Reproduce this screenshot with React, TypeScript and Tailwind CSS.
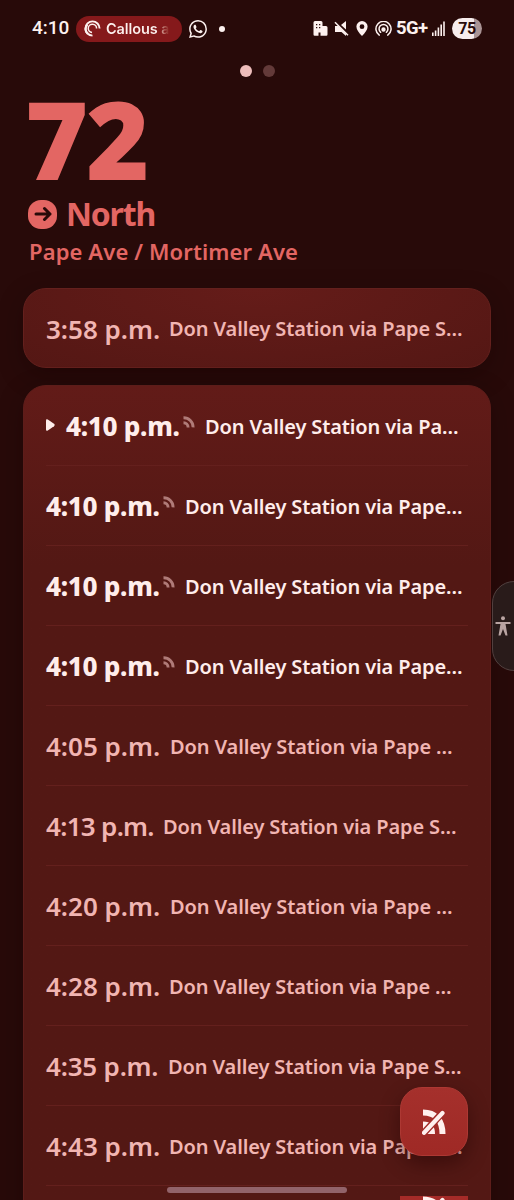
import clsx from 'clsx';

type Departure = {
  time: string;
  destination: string;
  timeWidth: string;
  live?: boolean;
  current?: boolean;
};

const departures: Departure[] = [
  { time: '4:10 p.m.', destination: 'Don Valley Station via Pa…', timeWidth: 'w-[117px]', live: true, current: true },
  { time: '4:10 p.m.', destination: 'Don Valley Station via Pape…', timeWidth: 'w-[117px]', live: true },
  { time: '4:10 p.m.', destination: 'Don Valley Station via Pape…', timeWidth: 'w-[117px]', live: true },
  { time: '4:10 p.m.', destination: 'Don Valley Station via Pape…', timeWidth: 'w-[117px]', live: true },
  { time: '4:05 p.m.', destination: 'Don Valley Station via Pape …', timeWidth: 'w-[124px]' },
  { time: '4:13 p.m.', destination: 'Don Valley Station via Pape S…', timeWidth: 'w-[117px] tracking-[-0.700px]' },
  { time: '4:20 p.m.', destination: 'Don Valley Station via Pape …', timeWidth: 'w-[124px]' },
  { time: '4:28 p.m.', destination: 'Don Valley Station via Pape …', timeWidth: 'w-[123px]' },
  { time: '4:35 p.m.', destination: 'Don Valley Station via Pape S…', timeWidth: 'w-[122px] tracking-[-0.200px]' },
  { time: '4:43 p.m.', destination: 'Don Valley Station via Pape S…', timeWidth: 'w-[123px]' },
];

function StatusBar() {
  return (
    <header className="flex h-[57px] shrink-0 items-center pl-[32px] font-['Roboto',sans-serif] text-[#fdf1ef]">
      <span className="w-[44px] text-[19px] font-medium">4:10</span>
      <div className="flex h-[26px] w-[106px] items-center rounded-full bg-[#85191b] pl-[8px]">
        <svg viewBox="0 0 18 18" className="size-[17px] shrink-0" fill="none" stroke="currentColor">
          <path d="M9 16.5A7.500 7.500 0 1 1 16.500 9" strokeWidth="2" />
          <path d="M8.500 13.200A4.400 4.400 0 1 1 13.300 9" strokeWidth="1.600" />
          <path d="M4 14.500A6.400 6.400 0 0 1 3.500 5" strokeWidth="2.400" />
        </svg>
        <span className="ml-[5px] bg-linear-to-r from-[#fdf1ef] from-80% to-[#85191b] bg-clip-text font-['Inter',sans-serif] text-[14.5px] font-semibold tracking-[-0.1px] text-transparent">
          Callous a
        </span>
      </div>
      <svg viewBox="0 0 24 24" className="ml-[7px] size-[18px]" fill="currentColor">
        <path d="M17.472 14.382c-.297-.149-1.758-.867-2.03-.967-.273-.099-.471-.148-.67.15-.197.297-.767.966-.94 1.164-.173.199-.347.223-.644.075-.297-.15-1.255-.463-2.39-1.475-.883-.788-1.48-1.761-1.653-2.059-.173-.297-.018-.458.13-.606.134-.133.298-.347.446-.52.149-.174.198-.298.298-.497.099-.198.05-.371-.025-.52-.075-.149-.669-1.612-.916-2.207-.242-.579-.487-.5-.669-.51-.173-.008-.371-.01-.57-.01-.198 0-.52.074-.792.372-.272.297-1.04 1.016-1.04 2.479 0 1.462 1.065 2.875 1.213 3.074.149.198 2.096 3.2 5.077 4.487.709.306 1.262.489 1.694.625.712.227 1.36.195 1.871.118.571-.085 1.758-.719 2.006-1.413.248-.694.248-1.289.173-1.413-.074-.124-.272-.198-.57-.347m-5.421 7.403h-.004a9.87 9.87 0 01-5.031-1.378l-.361-.214-3.741.982.998-3.648-.235-.374a9.86 9.86 0 01-1.51-5.26c.001-5.45 4.436-9.884 9.888-9.884 2.64 0 5.122 1.03 6.988 2.898a9.825 9.825 0 012.893 6.994c-.003 5.45-4.437 9.884-9.885 9.884m8.413-18.297A11.815 11.815 0 0012.05 0C5.495 0 .16 5.335.157 11.892c0 2.096.547 4.142 1.588 5.945L.057 24l6.305-1.654a11.882 11.882 0 005.683 1.448h.005c6.554 0 11.89-5.335 11.893-11.893a11.821 11.821 0 00-3.48-8.413z" />
      </svg>
      <span className="ml-[12px] size-[6px] rounded-full bg-current" />
      <svg viewBox="0 0 15 15" className="ml-[88px] size-[15px]" fill="currentColor">
        <path fillRule="evenodd" d="M2 0h6q1.5 0 1.5 1.5V5H13q1.5 0 1.5 1.5v7q0 1.2-1.2 1.2H7.5V11.500h-2v3.200H1.700Q.5 14.700.5 13.500V1.500Q.5 0 2 0ZM3 3v1.300h1.300V3Zm3 0v1.300h1.300V3ZM3 6v1.300h1.300V6Zm3 0v1.300h1.300V6Z" />
      </svg>
      <svg viewBox="0 0 15 15" className="ml-[6px] size-[15px]" fill="currentColor">
        <path d="M1 5h3.500l7.500 7.500V15L7.500 11H1Z" />
        <path d="m7 4 5-4v8.500Z" />
        <path d="M1 1.200 14 14.200" stroke="currentColor" strokeWidth="1.500" />
      </svg>
      <svg viewBox="0 0 12 15" className="ml-[7px] h-[15px] w-[12px]" fill="currentColor">
        <path fillRule="evenodd" d="M6 0a5.600 5.600 0 0 0-5.600 5.600C.4 9 3 12 6 15c3-3 5.600-6 5.600-9.400A5.600 5.600 0 0 0 6 0Zm0 3.300a2.400 2.400 0 1 1 0 4.800 2.400 2.400 0 0 1 0-4.800Z" />
      </svg>
      <svg viewBox="0 0 18 16" className="ml-[7px] h-[16px] w-[17px]" fill="none" stroke="currentColor" strokeWidth="1.600" strokeLinecap="round">
        <path d="M4.500 14.500a8 8 0 1 1 9 0" />
        <path d="M6 11.500a4.700 4.700 0 1 1 6 0" />
        <circle cx="9" cy="8.500" r="1.500" fill="currentColor" />
      </svg>
      <span className="ml-[4px] w-[36px] text-[18.500px] font-bold tracking-[-0.6px]">5G+</span>
      <svg viewBox="0 0 13 15" className="h-[15px] w-[13px]" fill="currentColor">
        <path d="M0 11.500h1.600V15H0Zm2.800-2h1.600V15H2.800Zm2.800-3h1.600V15H5.600Zm2.800-3H10V15H8.400Zm2.800-3h1.600V15h-1.600Z" />
      </svg>
      <span className="ml-[7px] flex h-[21px] w-[30px] items-center justify-center rounded-full bg-linear-to-r from-[#f7eded] from-75% to-[#aa9495] to-75% text-[16px] font-bold tracking-[-0.5px] text-[#280a09]">
        75
      </span>
    </header>
  );
}

function LiveIcon() {
  return (
    <svg viewBox="0 0 12 12" className="-mt-[9px] mr-[10px] size-[12px] shrink-0" fill="none" stroke="#b07b78" strokeWidth="2.900">
      <path d="M.5 1.800a9.400 9.400 0 0 1 9.600 9.600" />
      <path d="M.5 6.800a4.600 4.600 0 0 1 4.600 4.600" />
    </svg>
  );
}

function DepartureRow({ time, destination, timeWidth, live, current }: Departure) {
  return (
    <li className={clsx('flex h-[80px] shrink-0 items-center border-b border-[#64201d] pt-[2px]', live ? 'text-[#ffedeb]' : 'text-[#f1b5b2]')}>
      {current && (
        <svg viewBox="0 0 9 12" className="-mt-[4px] mr-[11px] h-[12px] w-[9px] shrink-0" fill="currentColor">
          <path d="M0 1.500Q0-.4 1.800.5L8 4.800q1.400 1.200 0 2.400L1.800 11.500Q0 12.400 0 10.500Z" />
        </svg>
      )}
      <span className={clsx('shrink-0 text-[26px] whitespace-nowrap', timeWidth, live ? 'font-extrabold tracking-[-0.300px]' : 'font-semibold')}>
        {time}
      </span>
      {live && <LiveIcon />}
      <span className="text-[20px] leading-[28px] font-semibold tracking-[-0.120px] whitespace-nowrap">{destination}</span>
    </li>
  );
}

function MuteLiveIcon() {
  return (
    <svg viewBox="0 0 24 26" className="h-[26px] w-[24px] shrink-0">
      <path d="M1 3.500C13 3.500 20.500 11 20.500 25" fill="none" stroke="#fff0ee" strokeWidth="6" />
      <path d="M1 12.500q12 0 12 12.500H1Z" fill="#fff0ee" />
      <path d="M0 26 22 2" stroke="#a32b28" strokeWidth="7" />
      <path d="M2 23.800 20.500 4" stroke="#fff0ee" strokeWidth="4.200" strokeLinecap="round" />
    </svg>
  );
}

export default function App() {
  return (
    <div className="relative flex h-[1200px] w-[514px] flex-col overflow-hidden bg-[#280a09] font-['Noto_Sans',sans-serif]">
      <StatusBar />
      <div className="flex h-[28px] shrink-0 items-center justify-center gap-[11px]">
        <span className="size-[12px] rounded-full bg-[#eebdbb]" />
        <span className="size-[12px] rounded-full bg-[#633a39]" />
      </div>

      <section className="flex h-[203px] shrink-0 flex-col pl-[28px] text-[#e36663]">
        <h1 className="-ml-[3px] mt-[8px] h-[106px] text-[108px] leading-[92px] font-black tracking-[-2px]">72</h1>
        <div className="flex h-[30px] items-center">
          <span className="flex size-[29px] items-center justify-center rounded-[13px] bg-current">
            <svg viewBox="0 0 18 16" className="h-[16px] w-[18px]" fill="none" stroke="#280a09" strokeWidth="3" strokeLinecap="round" strokeLinejoin="round">
              <path d="M2 8h14M10.500 2.500 16 8l-5.500 5.500" />
            </svg>
          </span>
          <h2 className="ml-[9px] text-[32px] leading-[30px] font-bold tracking-[-1.200px]">North</h2>
        </div>
        <p className="mt-[8px] ml-[1px] text-[22px] leading-[28px] font-semibold tracking-[0.120px]">Pape Ave / Mortimer Ave</p>
      </section>

      <main className="flex flex-col gap-[17px] px-[23px]">
        <div className="flex h-[80px] shrink-0 items-center rounded-[23px] border border-[#64201d] bg-radial-[at_50%_0%] from-[#651c19] to-[#541714] px-[22px] pt-[2px] text-[#f1b5b2] shadow-[0_8px_24px_rgba(20,0,0,0.35)]">
          <span className="w-[123px] shrink-0 text-[26px] font-semibold whitespace-nowrap">3:58 p.m.</span>
          <span className="text-[20px] leading-[28px] font-semibold tracking-[-0.120px] whitespace-nowrap">
            Don Valley Station via Pape S…
          </span>
        </div>
        <ul className="flex h-[860px] shrink-0 flex-col rounded-[23px] border border-[#5d1d1a] bg-[#531814] bg-linear-to-b from-[#621b18] to-[#531814] to-[180px] px-[22px] shadow-[0_8px_24px_rgba(20,0,0,0.35)]">
          {departures.map((departure, i) => (
            <DepartureRow key={i} {...departure} />
          ))}
        </ul>
      </main>

      <button type="button" aria-label="Accessibility" className="absolute top-[581px] left-[492px] flex h-[90px] w-[30px] items-center rounded-l-[22px] border border-[#51403f] bg-[#291b1a] pl-[2px]">
        <svg viewBox="0 0 16 20" className="h-[20px] w-[16px]" fill="#b9a4a2">
          <circle cx="8" cy="2.200" r="2" />
          <path d="M.5 6h15v2h-5l2 11.500h-2L8 13l-2.500 6.500h-2L5.500 8h-5Z" />
        </svg>
      </button>

      <button
        type="button"
        aria-label="Mute live updates"
        className="absolute top-[1087px] left-[400px] flex h-[69px] w-[68px] items-center justify-center rounded-[22px] border border-[#ad3833] bg-linear-to-b from-[#a5302c] to-[#9f2925] shadow-[0_8px_20px_rgba(30,0,0,0.45)]"
      >
        <MuteLiveIcon />
      </button>

      {/* top edge of the next floating button */}
      <div className="absolute top-[1196px] left-[400px] flex h-[4px] w-[68px] justify-center overflow-hidden bg-[#a52b28]">
        <MuteLiveIcon />
      </div>
      <div className="absolute top-[1187px] left-[167px] h-[6px] w-[180px] rounded-full bg-[#92636a]" />
    </div>
  );
}
